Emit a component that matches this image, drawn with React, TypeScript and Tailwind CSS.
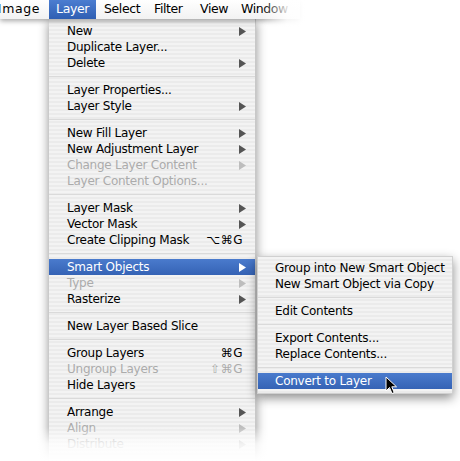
import type { ReactNode } from 'react'

type Item =
  | { sep: true }
  | { label: string; sub?: boolean; off?: boolean; keys?: string; on?: boolean }

const LAYER_MENU: Item[] = [
  { label: 'New', sub: true },
  { label: 'Duplicate Layer...' },
  { label: 'Delete', sub: true },
  { sep: true },
  { label: 'Layer Properties...' },
  { label: 'Layer Style', sub: true },
  { sep: true },
  { label: 'New Fill Layer', sub: true },
  { label: 'New Adjustment Layer', sub: true },
  { label: 'Change Layer Content', sub: true, off: true },
  { label: 'Layer Content Options...', off: true },
  { sep: true },
  { label: 'Layer Mask', sub: true },
  { label: 'Vector Mask', sub: true },
  { label: 'Create Clipping Mask', keys: '⌥⌘G' },
  { sep: true },
  { label: 'Smart Objects', sub: true, on: true },
  { label: 'Type', sub: true, off: true },
  { label: 'Rasterize', sub: true },
  { sep: true },
  { label: 'New Layer Based Slice' },
  { sep: true },
  { label: 'Group Layers', keys: '⌘G' },
  { label: 'Ungroup Layers', keys: '⇧⌘G', off: true },
  { label: 'Hide Layers' },
  { sep: true },
  { label: 'Arrange', sub: true },
  { label: 'Align', sub: true, off: true },
  { label: 'Distribute', sub: true, off: true },
]

const SMART_MENU: Item[] = [
  { label: 'Group into New Smart Object' },
  { label: 'New Smart Object via Copy' },
  { sep: true },
  { label: 'Edit Contents' },
  { sep: true },
  { label: 'Export Contents...' },
  { label: 'Replace Contents...' },
  { sep: true },
  { label: 'Convert to Layer', on: true },
]

// aqua pinstripe background
const STRIPES =
  'bg-[repeating-linear-gradient(180deg,#f3f3f3_0px,#f3f3f3_2px,#ebebeb_2px,#ebebeb_4px)]'

function Arrow({ on, off }: { on?: boolean; off?: boolean }) {
  const fill = on ? '#ffffff' : off ? '#bdbdbd' : '#555555'
  return (
    <svg width="7" height="9" viewBox="0 0 7 9" className="shrink-0 mr-[2px]">
      <path d="M0 0 L7 4.5 L0 9 Z" fill={fill} />
    </svg>
  )
}

function MenuRows({ items, textPad, rightPad }: { items: Item[]; textPad: string; rightPad: string }) {
  return (
    <>
      {items.map((it, i) => {
        if ('sep' in it) {
          return (
            <div key={i} className="h-[11px] flex items-center">
              <div className="h-px w-full bg-[#dadada]" />
            </div>
          )
        }
        const color = it.on ? 'text-white' : it.off ? 'text-[#ababab]' : 'text-black'
        return (
          <div
            key={i}
            className={`h-[16px] flex items-center ${textPad} ${rightPad} ${color} ${
              it.on ? 'bg-gradient-to-b from-[#4a7bcd] to-[#3563b5]' : ''
            }`}
          >
            <span className="flex-1 whitespace-nowrap">{it.label}</span>
            {it.keys && <span className="tracking-[0.5px] mr-[5px]">{it.keys}</span>}
            {'sub' in it && it.sub && <Arrow on={it.on} off={it.off} />}
          </div>
        )
      })}
    </>
  )
}

function BarItem({ children, on, className = '' }: { children: ReactNode; on?: boolean; className?: string }) {
  return (
    <div
      className={`h-full flex items-center whitespace-nowrap shrink-0 ${
        on ? 'bg-gradient-to-b from-[#4b7dd0] to-[#2f5fb3] text-white' : 'text-black'
      } ${className}`}
    >
      {children}
    </div>
  )
}

function Cursor() {
  return (
    <svg width="13" height="19" viewBox="0 0 13 19" className="absolute z-40 left-[385px] top-[376px]">
      <path
        d="M1 1 L1 15 L4.5 11.5 L7 17.5 L9.2 16.6 L6.8 10.8 L11.5 10.8 Z"
        fill="#000"
        stroke="#fff"
        strokeWidth="1"
        strokeLinejoin="round"
      />
    </svg>
  )
}

export default function App() {
  return (
    <div className="relative w-[460px] h-[461px] overflow-hidden bg-white font-['DejaVu_Sans',sans-serif] text-[12px] tracking-[-0.25px]">
      {/* menu bar */}
      <div className="relative z-20 h-[19px] flex text-[12.5px] tracking-[-0.4px] bg-gradient-to-b from-white to-[#f2f2f2] shadow-[0_2px_5px_rgba(0,0,0,0.35)] w-[300px]">
        {/* "Image" is cut off at the left edge */}
        <BarItem className="w-[49px] justify-end pr-[9px] overflow-hidden">
          <span className="shrink-0 tracking-[0.6px]">Image</span>
        </BarItem>
        <BarItem on className="w-[47px] justify-center">
          Layer
        </BarItem>
        <BarItem className="pl-[8px] w-[58px]">Select</BarItem>
        <BarItem className="w-[46px]">Filter</BarItem>
        <BarItem className="w-[41px]">View</BarItem>
        <BarItem>Window</BarItem>
      </div>
      {/* right fade of the bar */}
      <div className="absolute z-30 left-[262px] top-0 w-[50px] h-[30px] bg-gradient-to-r from-[rgba(255,255,255,0)] via-[rgba(255,255,255,0.85)] to-white" />

      {/* Layer menu */}
      <div
        className={`relative z-10 ml-[49px] w-[207px] pt-[4px] pb-[10px] ${STRIPES} shadow-[0_3px_10px_rgba(0,0,0,0.45)] border-r border-[#c8c8c8]`}
      >
        <MenuRows items={LAYER_MENU} textPad="pl-[18px]" rightPad="pr-[7px]" />
      </div>

      {/* Smart Objects submenu */}
      <div
        className={`absolute z-30 left-[257px] top-[256px] w-[196px] pt-[3px] pb-[4px] ${STRIPES} shadow-[0_4px_10px_rgba(0,0,0,0.45)] border border-[#d0d0d0]`}
      >
        <MenuRows items={SMART_MENU} textPad="pl-[17px]" rightPad="pr-[8px]" />
      </div>

      <Cursor />

      {/* bottom fade */}
      <div className="absolute z-40 left-0 bottom-0 w-full h-[34px] bg-gradient-to-b from-[rgba(255,255,255,0)] via-[rgba(255,255,255,0.8)] to-white" />
    </div>
  )
}
